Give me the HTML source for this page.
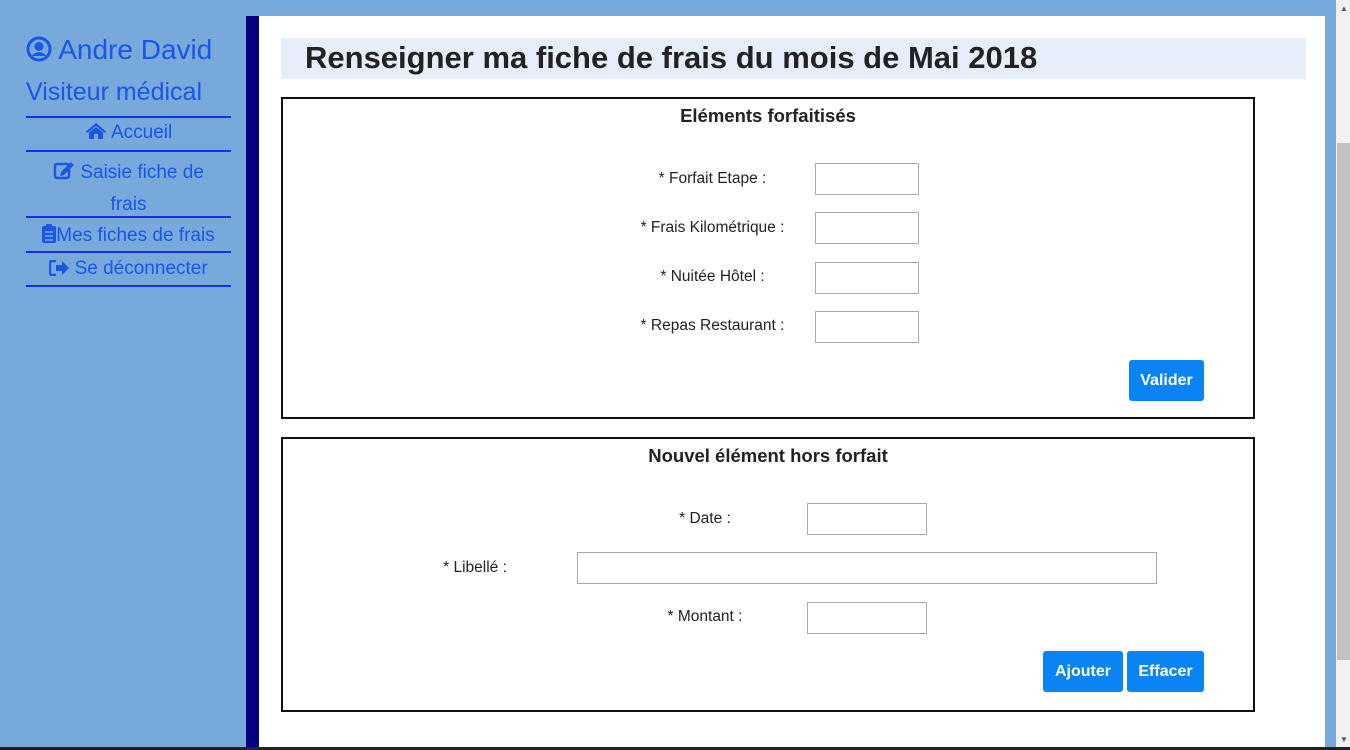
<!DOCTYPE html>
<html><head><meta charset="utf-8"><style>
*{margin:0;padding:0;box-sizing:border-box}
body{width:1350px;height:750px;background:#77a9da;position:relative;overflow:hidden;font-family:"Liberation Sans","DejaVu Sans",sans-serif}
.a{position:absolute}
.nav{color:#1a56e8;font-size:19px;text-align:center;width:205px;left:26px;white-space:nowrap}
.nav svg{vertical-align:-2px}
.ln{position:absolute;left:26px;width:205px;height:2px;background:#1a2cf0}
.lbl{position:absolute;font-size:15.5px;color:#222;text-align:center}
.in{position:absolute;border:1px solid #aaa;background:#fff;height:32px}
.btn{position:absolute;background:#0a84f5;color:#fff;border-radius:3px;font-size:16px;font-weight:bold;text-align:center;line-height:41px;height:41px}
.box{position:absolute;left:281px;width:974px;border:2px solid #111;background:#fff}
.h{position:absolute;width:100%;text-align:center;font-weight:bold;font-size:18.5px;color:#222}
</style></head><body>
<div class="a" style="left:246px;top:16px;width:13px;height:734px;background:#000080"></div>
<div class="a" style="left:259px;top:16px;width:1066px;height:734px;background:#fff"></div>
<div class="a" style="left:1336px;top:0;width:14px;height:750px;background:#f1f1f1"></div>
<div class="a" style="left:1337px;top:143px;width:13px;height:517px;background:#c1c1c1"></div>
<div class="a" style="left:1340px;top:4px;color:#555;font-size:8px">▲</div>
<div class="a" style="left:1340px;top:735px;color:#555;font-size:8px">▼</div>
<div class="a" style="left:0;top:747px;width:1350px;height:3px;background:#222"></div>

<div class="a" style="left:26px;top:34px;color:#1a56e8;font-size:28px;white-space:nowrap">
<svg width="26" height="26" viewBox="0 0 26 26" style="vertical-align:-3px"><circle cx="13" cy="13" r="11" fill="none" stroke="#1a56e8" stroke-width="3"/><circle cx="13" cy="10.5" r="4.5" fill="#1a56e8"/><path d="M6 20c2-5 12-5 14 0" fill="#1a56e8"/></svg> Andre David</div>
<div class="a" style="left:26px;top:78px;color:#1a56e8;font-size:25px">Visiteur médical</div>
<div class="ln" style="top:116px"></div>
<div class="a nav" style="top:122px"><svg width="22" height="18" viewBox="0 0 22 18"><path d="M11 1L1 9.5l1.5 1.5L11 4l8.5 7L21 9.5z" fill="#1a56e8"/><path d="M4 10.5L11 5l7 5.5V17h-5v-5H9v5H4z" fill="#1a56e8"/></svg> Accueil</div>
<div class="ln" style="top:150px"></div>
<div class="a nav" style="top:157px;line-height:32px"><svg width="22" height="20" viewBox="0 0 22 20"><rect x="2" y="4" width="14" height="14" rx="2" fill="none" stroke="#1a56e8" stroke-width="2.5"/><path d="M8 12l10-10 3 3-10 10-4 1z" fill="#1a56e8"/></svg> Saisie fiche de<br>frais</div>
<div class="ln" style="top:216px"></div>
<div class="a nav" style="top:224px"><svg width="14" height="19" viewBox="0 0 14 19"><rect x="0" y="2" width="14" height="17" rx="2" fill="#1a56e8"/><rect x="4" y="0" width="6" height="4" rx="1" fill="#1a56e8"/><path d="M3 8h8M3 12h8M3 16h8" stroke="#77a9da" stroke-width="1.5"/></svg>Mes fiches de frais</div>
<div class="ln" style="top:251px"></div>
<div class="a nav" style="top:258px"><svg width="20" height="16" viewBox="0 0 20 16"><path d="M7 1H3a2 2 0 0 0-2 2v10a2 2 0 0 0 2 2h4" fill="none" stroke="#1a56e8" stroke-width="2.5"/><path d="M7 5h6V1l7 7-7 7v-4H7z" fill="#1a56e8"/></svg> Se déconnecter</div>
<div class="ln" style="top:285px"></div>

<div class="a" style="left:281px;top:38px;width:1025px;height:41px;background:#e6eefb"></div>
<div class="a" style="left:305px;top:40px;font-size:31px;font-weight:bold;color:#222;white-space:nowrap">Renseigner ma fiche de frais du mois de Mai 2018</div>

<div class="box" style="top:97px;height:322px">
<div class="h" style="top:6px">Eléments forfaitisés</div>
</div>
<div class="lbl" style="left:600px;top:170px;width:225px">* Forfait Etape :</div>
<div class="lbl" style="left:600px;top:219px;width:225px">* Frais Kilométrique :</div>
<div class="lbl" style="left:600px;top:268px;width:225px">* Nuitée Hôtel :</div>
<div class="lbl" style="left:600px;top:317px;width:225px">* Repas Restaurant :</div>
<div class="in" style="left:815px;top:163px;width:104px"></div>
<div class="in" style="left:815px;top:212px;width:104px"></div>
<div class="in" style="left:815px;top:262px;width:104px"></div>
<div class="in" style="left:815px;top:311px;width:104px"></div>
<div class="btn" style="left:1129px;top:360px;width:75px">Valider</div>

<div class="box" style="top:437px;height:275px">
<div class="h" style="top:6px">Nouvel élément hors forfait</div>
</div>
<div class="lbl" style="left:640px;top:510px;width:130px">* Date :</div>
<div class="lbl" style="left:410px;top:559px;width:130px">* Libellé :</div>
<div class="lbl" style="left:640px;top:608px;width:130px">* Montant :</div>
<div class="in" style="left:807px;top:503px;width:120px"></div>
<div class="in" style="left:577px;top:552px;width:580px"></div>
<div class="in" style="left:807px;top:602px;width:120px"></div>
<div class="btn" style="left:1043px;top:651px;width:80px">Ajouter</div>
<div class="btn" style="left:1127px;top:651px;width:77px">Effacer</div>
</body></html>
